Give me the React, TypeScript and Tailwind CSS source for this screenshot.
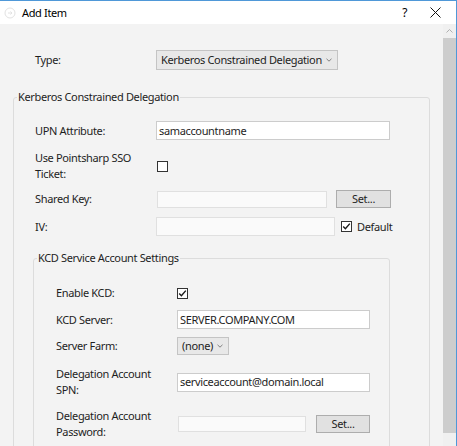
import type { ReactNode } from "react";

const Chevron = () => (
  <svg width="6" height="4" viewBox="0 0 6 4" className="shrink-0">
    <path d="M0.5 0.8 L3 3.2 L5.5 0.8" fill="none" stroke="#808080" strokeWidth="1" />
  </svg>
);

const CheckBox = ({ checked }: { checked?: boolean }) => (
  <div className="w-[11px] h-[11px] border border-[#333333] bg-white flex items-center justify-center shrink-0">
    {checked && (
      <svg width="9" height="9" viewBox="0 0 9 9">
        <path d="M1.2 4.6 L3.4 6.8 L7.8 1.6" fill="none" stroke="#1a1a1a" strokeWidth="1.4" />
      </svg>
    )}
  </div>
);

const TextBox = ({ value, className }: { value?: string; className: string }) => (
  <div
    className={
      "flex items-center px-[2px] shrink-0 " +
      (value ? "bg-white border border-[#cccccc] " : "bg-[#fafafa] border border-[#e0e0e0] ") +
      className
    }
  >
    {value}
  </div>
);

const SetButton = ({ className }: { className: string }) => (
  <div
    className={
      "flex items-center justify-center bg-[#e1e1e1] border border-[#adadad] shrink-0 " + className
    }
  >
    Set...
  </div>
);

const Row = ({ label, className, children }: { label: ReactNode; className: string; children: ReactNode }) => (
  <div className={"flex items-center " + className}>
    <div className="w-[121px] shrink-0">{label}</div>
    {children}
  </div>
);

const Dropdown = ({ value, className }: { value: string; className: string }) => (
  <div
    className={
      "flex items-center pl-[4px] pr-[5px] bg-[#e8e8e8] border border-[#c4c4c4] shrink-0 " +
      className
    }
  >
    <span className="whitespace-nowrap">{value}</span>
    <span className="ml-auto flex">
      <Chevron />
    </span>
  </div>
);

export default function App() {
  return (
    <div className="w-[457px] h-[446px] overflow-hidden flex flex-col bg-[#f3f3f3] border-t border-r border-[#4f98d8] font-['Noto_Sans',sans-serif] text-[11px] leading-[16px] tracking-[-0.35px] text-[#1e1e1e]">
      {/* title bar */}
      <div className="h-[23px] bg-white flex items-center shrink-0">
        <svg width="12" height="12" viewBox="0 0 12 12" className="ml-[4px]">
          <circle cx="6" cy="6" r="5" fill="none" stroke="#e2e2e2" strokeWidth="1" />
          <path d="M4 6 H8 M6.5 4.5 L8 6 L6.5 7.5" fill="none" stroke="#e2e2e2" strokeWidth="1" />
        </svg>
        <span className="ml-[6px] text-[#000]">Add Item</span>
        <span className="ml-auto mr-[23px] text-[12px] text-[#000]">?</span>
        <svg width="11" height="11" viewBox="0 0 11 11" className="mr-[15px]">
          <path d="M0.5 0.5 L10.5 10.5 M10.5 0.5 L0.5 10.5" stroke="#111" strokeWidth="1" />
        </svg>
      </div>

      <div className="flex flex-1 min-h-0">
        <div className="flex-1 min-w-0">
          {/* type */}
          <div className="flex items-center mt-[26px] h-[20px] pl-[35px]">
            <div className="w-[121px] shrink-0">Type:</div>
            <Dropdown value="Kerberos Constrained Delegation" className="w-[182px] h-[20px]" />
          </div>

          <fieldset className="mt-[19px] ml-[13px] w-[417px] border border-[#dcdcdc] rounded-[3px] pb-[40px]">
            <legend className="ml-[3px] px-[1px]">Kerberos Constrained Delegation</legend>
            <div className="pl-[21px] pt-[16px]">
              <Row label="UPN Attribute:" className="h-[19px]">
                <TextBox value="samaccountname" className="w-[234px] h-[19px]" />
              </Row>
              <Row
                label={
                  <>
                    Use Pointsharp SSO
                    <br />
                    Ticket:
                  </>
                }
                className="mt-[10px] h-[32px]"
              >
                <div className="ml-[1px]">
                  <CheckBox />
                </div>
              </Row>
              <Row label="Shared Key:" className="mt-[8px] h-[18px]">
                <TextBox className="ml-[1px] w-[170px] h-[17px]" />
                <SetButton className="ml-[9px] w-[55px] h-[18px]" />
              </Row>
              <Row label="IV:" className="mt-[9px] h-[19px]">
                <TextBox className="w-[179px] h-[19px]" />
                <div className="ml-[6px]">
                  <CheckBox checked />
                </div>
                <span className="ml-[5px]">Default</span>
              </Row>
            </div>

            <fieldset className="mt-[14px] ml-[19px] w-[357px] border border-[#dcdcdc] rounded-[3px] pb-[20px]">
              <legend className="ml-[3px] px-[1px]">KCD Service Account Settings</legend>
              <div className="pl-[22px] pt-[19px]">
                <Row label="Enable KCD:" className="h-[16px]">
                  <CheckBox checked />
                </Row>
                <Row label="KCD Server:" className="mt-[9px] h-[19px]">
                  <TextBox value="SERVER.COMPANY.COM" className="w-[193px] h-[19px]" />
                </Row>
                <Row label="Server Farm:" className="mt-[8px] h-[18px]">
                  <Dropdown value="(none)" className="w-[52px] h-[18px]" />
                </Row>
                <Row
                  label={
                    <>
                      Delegation Account
                      <br />
                      SPN:
                    </>
                  }
                  className="mt-[11px] h-[32px]"
                >
                  <TextBox value="serviceaccount@domain.local" className="w-[193px] h-[19px]" />
                </Row>
                <Row
                  label={
                    <>
                      Delegation Account
                      <br />
                      Password:
                    </>
                  }
                  className="mt-[10px] h-[32px]"
                >
                  <TextBox className="ml-[1px] w-[128px] h-[16px]" />
                  <SetButton className="ml-[10px] w-[54px] h-[18px]" />
                </Row>
              </div>
            </fieldset>
          </fieldset>
        </div>

        {/* scrollbar */}
        <div className="w-[13px] shrink-0 flex flex-col bg-[#f0f0f0]">
          <div className="h-[14px] flex items-center justify-center shrink-0">
            <svg width="7" height="4" viewBox="0 0 7 4">
              <path d="M0.5 3.5 L3.5 0.5 L6.5 3.5" fill="none" stroke="#b0b0b0" strokeWidth="1" />
            </svg>
          </div>
          <div className="h-[395px] bg-[#cdcdcd] shrink-0" />
        </div>
      </div>
    </div>
  );
}
